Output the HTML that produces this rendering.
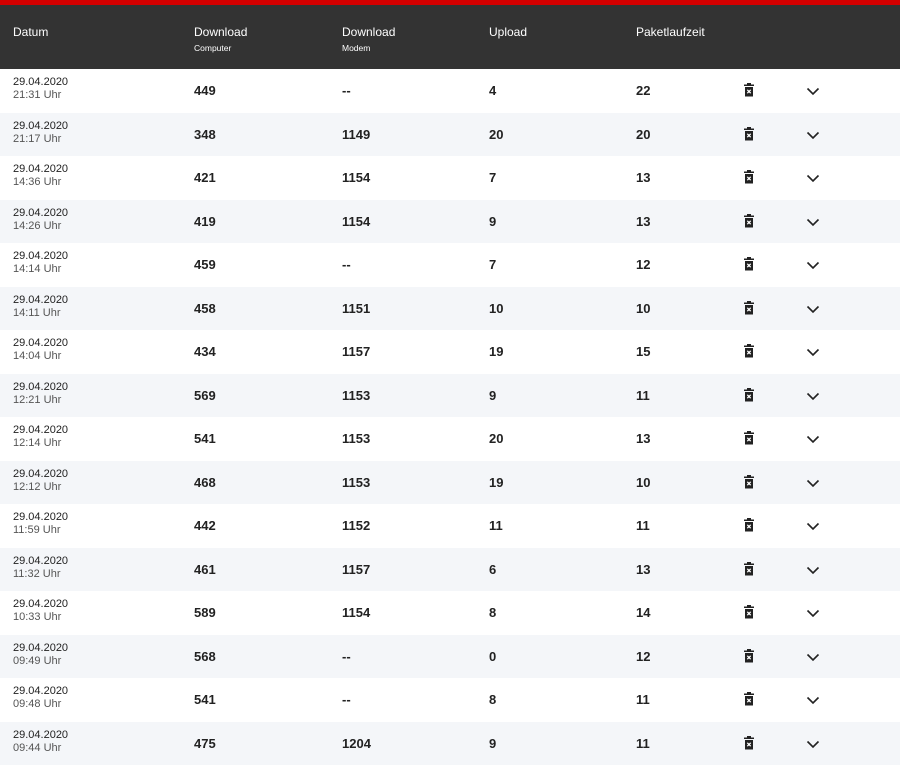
<!DOCTYPE html>
<html><head><meta charset="utf-8"><style>
*{margin:0;padding:0;box-sizing:border-box}
body{width:900px;height:760px;overflow:hidden;background:#fff;font-family:"Liberation Sans",sans-serif;color:#222}
.red{height:5px;background:#d40000}
.hd{height:64px;background:#333;color:#fff;position:relative}
.hd div{position:absolute;top:20px;font-size:12px}
.hd small{display:block;font-size:8.5px;margin-top:4px}
.row{height:43.5px;position:relative}
.row:nth-child(even){background:#f4f6f9}
.row div{position:absolute}
.d{left:13px;top:7px;font-size:11px;line-height:13px;color:#222}
.d span{color:#555}
.v{top:14px;font-size:13px;font-weight:bold;color:#222}
.t{left:743px;top:14px}
.c{left:806px;top:14px}
</style></head><body>
<div class="red"></div>
<div class="hd">
<div style="left:13px">Datum</div>
<div style="left:194px">Download<small>Computer</small></div>
<div style="left:342px">Download<small>Modem</small></div>
<div style="left:489px">Upload</div>
<div style="left:636px">Paketlaufzeit</div>
</div>
<div id="rows"></div>
<script>
var d=[["21:31","449","--","4","22"],["21:17","348","1149","20","20"],["14:36","421","1154","7","13"],["14:26","419","1154","9","13"],["14:14","459","--","7","12"],["14:11","458","1151","10","10"],["14:04","434","1157","19","15"],["12:21","569","1153","9","11"],["12:14","541","1153","20","13"],["12:12","468","1153","19","10"],["11:59","442","1152","11","11"],["11:32","461","1157","6","13"],["10:33","589","1154","8","14"],["09:49","568","--","0","12"],["09:48","541","--","8","11"],["09:44","475","1204","9","11"]];
var h='';d.forEach(function(r){h+='<div class="row"><div class="d">29.04.2020<br><span>'+r[0]+' Uhr</span></div><div class="v" style="left:194px">'+r[1]+'</div><div class="v" style="left:342px">'+r[2]+'</div><div class="v" style="left:489px">'+r[3]+'</div><div class="v" style="left:636px">'+r[4]+'</div><div class="t"><svg width="12" height="14" viewBox="0 0 12 14"><rect x="1" y="1.5" width="10" height="1.5" fill="#222"/><rect x="4" y="0" width="4" height="2" fill="#222"/><path d="M2 4h8v9.5H2z" fill="#222"/><path d="M4.3 6.8l3.4 3.4M7.7 6.8l-3.4 3.4" stroke="#fff" stroke-width="1.3"/></svg></div><div class="c"><svg width="14" height="9" viewBox="0 0 14 9"><path d="M1.5 1.5l5.5 5.5 5.5-5.5" fill="none" stroke="#222" stroke-width="1.6"/></svg></div></div>'});
document.getElementById('rows').innerHTML=h;
</script>
</body></html>
